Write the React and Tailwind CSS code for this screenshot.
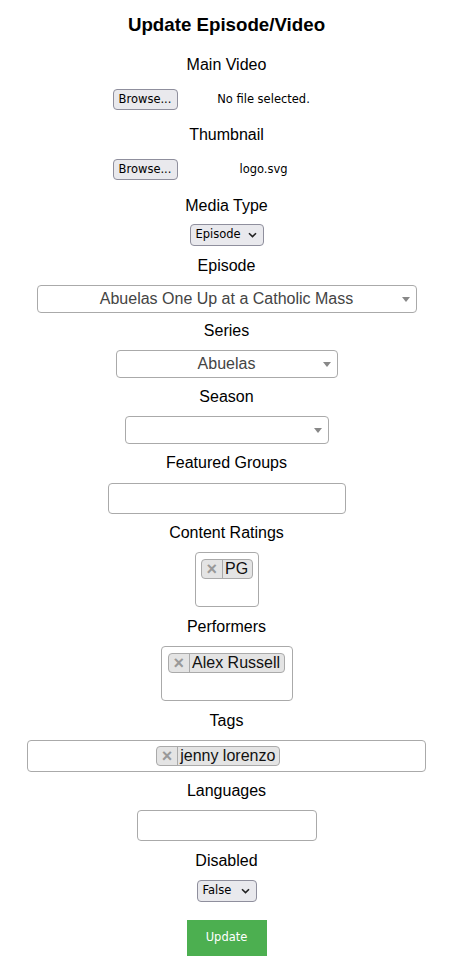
import React from "react";

const Label = ({ children, mt }) => (
  <div className={`${mt} text-[16px] leading-[18px]`}>{children}</div>
);

const FileRow = ({ name }) => (
  <div className="mt-[15px] flex w-[228px] items-center font-['DejaVu_Sans',sans-serif] text-[11.5px]">
    <div className="flex h-[21px] w-[65px] items-center justify-center rounded-[4px] border border-[#8f8f9d] bg-[#e9e9ed]">
      Browse...
    </div>
    <span className="ml-[9px] flex-1 text-center">{name}</span>
  </div>
);

const Chevron = () => (
  <svg width="9" height="6" viewBox="0 0 9 6" className="ml-auto">
    <path d="M1 1.2 L4.5 4.6 L8 1.2" fill="none" stroke="#222" strokeWidth="1.6" />
  </svg>
);

const NativeSelect = ({ value, w, mt }) => (
  <div
    className={`${mt} ${w} flex h-[22px] items-center rounded-[4px] border border-[#8f8f9d] bg-[#e9e9ed] pl-[5px] pr-[6px] font-['DejaVu_Sans',sans-serif] text-[11.5px]`}
  >
    <span>{value}</span>
    <Chevron />
  </div>
);

const Select2 = ({ value, w }) => (
  <div
    className={`relative mt-[10px] ${w} flex h-[28px] items-center justify-center rounded-[4px] border border-[#aaa] bg-white text-[16px] text-[#444]`}
  >
    <span>{value}</span>
    <span className="absolute right-[6px] top-[11px] h-0 w-0 border-x-[4px] border-t-[5px] border-x-transparent border-t-[#888]" />
  </div>
);

const Chip = ({ text }) => (
  <div className="inline-flex h-[20px] items-center whitespace-nowrap rounded-[4px] border border-[#aaa] bg-[#e4e4e4] text-[16px] leading-none text-[#111]">
    <span className="flex h-full items-center border-r border-[#aaa] px-[5px] text-[18px] font-bold text-[#999]">
      ×
    </span>
    <span className="pl-[2px] pr-[4px]">{text}</span>
  </div>
);

export default function App() {
  return (
    <div className="flex min-h-[961px] flex-col items-center bg-white pl-[1px] font-['Liberation_Sans',Arial,sans-serif] text-black">
      <h3 className="mt-[14px] text-[18.72px] font-bold leading-[22px]">
        Update Episode/Video
      </h3>

      <Label mt="mt-[20px]">Main Video</Label>
      <FileRow name="No file selected." />

      <Label mt="mt-[16px]">Thumbnail</Label>
      <FileRow name="logo.svg" />

      <Label mt="mt-[17px]">Media Type</Label>
      <NativeSelect value="Episode" w="w-[74px]" mt="mt-[9px]" />

      <Label mt="mt-[11px]">Episode</Label>
      <Select2 value="Abuelas One Up at a Catholic Mass" w="w-[380px]" />

      <Label mt="mt-[9px]">Series</Label>
      <Select2 value="Abuelas" w="w-[222px]" />

      <Label mt="mt-[10px]">Season</Label>
      <Select2 value="" w="w-[204px]" />

      <Label mt="mt-[10px]">Featured Groups</Label>
      <div className="mt-[11px] h-[31px] w-[238px] rounded-[4px] border border-[#aaa]" />

      <Label mt="mt-[10px]">Content Ratings</Label>
      <div className="mt-[10px] h-[55px] w-[64px] rounded-[4px] border border-[#aaa] px-[5px] pt-[5px]">
        <Chip text="PG" />
      </div>

      <Label mt="mt-[11px]">Performers</Label>
      <div className="mt-[10px] h-[55px] w-[132px] rounded-[4px] border border-[#aaa] px-[6px] pt-[5px]">
        <Chip text="Alex Russell" />
      </div>

      <Label mt="mt-[11px]">Tags</Label>
      <div className="mt-[10px] flex h-[32px] w-[399px] justify-center rounded-[4px] border border-[#aaa] pr-[17px] pt-[5px]">
        <Chip text="jenny lorenzo" />
      </div>

      <Label mt="mt-[10px]">Languages</Label>
      <div className="mt-[10px] h-[31px] w-[180px] rounded-[4px] border border-[#aaa]" />

      <Label mt="mt-[11px]">Disabled</Label>
      <NativeSelect value="False" w="w-[60px]" mt="mt-[10px]" />

      <button className="mt-[18px] h-[36px] w-[80px] bg-[#4caf50] font-['DejaVu_Sans',sans-serif] text-[11.5px] text-white">
        Update
      </button>
    </div>
  );
}
